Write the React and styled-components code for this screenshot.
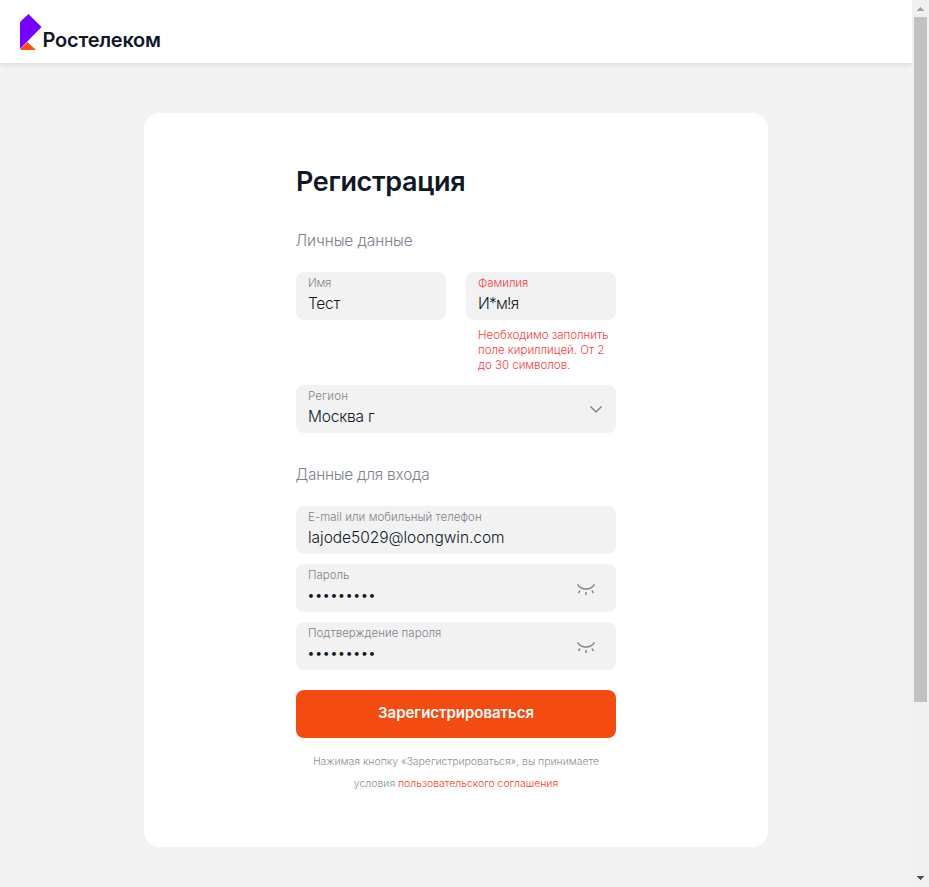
import React from 'react';
import styled, { createGlobalStyle } from 'styled-components';

const GlobalStyle = createGlobalStyle`
  *, *::before, *::after { box-sizing: border-box; }
  html, body { margin: 0; padding: 0; overflow: hidden; background: #f3f3f3; }
  body { font-family: Inter, "Liberation Sans", sans-serif; font-weight: 300; color: #101828; }
`;

const Window = styled.div`
  display: flex;
  width: 100%;
  height: 887px;
  overflow: hidden;
`;

const Page = styled.div`
  flex: 1;
  min-width: 0;
  display: flex;
  flex-direction: column;
  background: #f3f3f3;
`;

const Header = styled.header`
  flex: none;
  height: 63px;
  padding: 14px 0 0 20px;
  display: flex;
  align-items: flex-start;
  background: #fff;
  box-shadow: 0 1px 6px rgba(16, 24, 40, 0.14);
`;

const LogoMark = styled.svg`
  display: block;
  width: 22px;
  height: 36px;
`;

const LogoName = styled.span`
  margin: 14px 0 0 0.6px;
  font-size: 20px;
  line-height: 24px;
  font-weight: 600;
  letter-spacing: -0.25px;
`;

const Card = styled.main`
  flex: none;
  width: 624px;
  height: 734px;
  margin: 50px auto 0;
  padding: 52px 152px 0;
  border-radius: 16px;
  background: #fff;
`;

const Title = styled.h1`
  margin: 0;
  font-size: 27px;
  line-height: 34px;
  font-weight: 600;
  letter-spacing: -0.36px;
`;

const SectionTitle = styled.h2`
  margin: ${p => p.$top}px 0 21px -0.5px;
  font-size: 15.5px;
  line-height: 20px;
  font-weight: 300;
  letter-spacing: ${p => p.$spacing}px;
  color: #7d828c;
`;

const NameRow = styled.div`
  display: grid;
  grid-template-columns: 150px 150px;
  gap: 20px;
  margin-bottom: 12px;
`;

const Stack = styled.div`
  display: flex;
  flex-direction: column;
  gap: 10px;
`;

const FieldBox = styled.div`
  height: 48px;
  padding: 4px 20px 0 12px;
  display: flex;
  justify-content: space-between;
  border-radius: 8px;
  background: #f2f2f2;
`;

const FieldText = styled.div`
  display: flex;
  flex-direction: column;
  white-space: nowrap;
`;

const Label = styled.label`
  font-size: 11.5px;
  line-height: 15px;
  letter-spacing: ${p => p.$spacing}px;
  color: ${p => (p.$error ? '#ff3b3b' : '#7d828c')};
`;

const Value = styled.span`
  margin-top: 3px;
  font-size: 15.5px;
  line-height: 20px;
  letter-spacing: ${p => p.$spacing}px;
`;

const MaskedValue = styled(Value)`
  margin: 2px 0 0 -1px;
  font-size: 14px;
  font-weight: 300;
  letter-spacing: -0.25px;
`;

const FieldIcon = styled.svg`
  flex: none;
  align-self: flex-start;
  display: block;
  width: 20px;
  height: 20px;
  margin: ${p => p.$top}px ${p => p.$right}px 0 0;
  fill: none;
  stroke: #80848f;
  stroke-width: 1.5;
`;

const ErrorText = styled.p`
  margin: 8px 0 0 12px;
  font-size: 11.5px;
  line-height: 15px;
  letter-spacing: -0.02px;
  white-space: nowrap;
  color: #ff3b3b;
`;

const SubmitButton = styled.button`
  display: block;
  width: 320px;
  height: 48px;
  margin: 20px 0 0;
  padding: 0 0 2px;
  border: 0;
  border-radius: 8px;
  background: #f44b12;
  color: #fff;
  font: 600 15px/20px Inter, sans-serif;
  letter-spacing: -0.04px;
`;

const Agreement = styled.p`
  margin: 13px 0 0;
  font-size: 10.5px;
  line-height: 22px;
  letter-spacing: -0.03px;
  text-align: center;
  color: #8b8f98;
`;

const AgreementLink = styled.a`
  color: #ff3b20;
  text-decoration: none;
`;

const Scrollbar = styled.aside`
  flex: none;
  width: 17px;
  display: flex;
  flex-direction: column;
  align-items: center;
  background: #f0f0f0;
`;

const ScrollArrow = styled.svg`
  display: block;
  width: 17px;
  height: 17px;
  margin-top: ${p => (p.$end ? 'auto' : 0)};
  fill: ${p => (p.$end ? '#505050' : '#a3a3a3')};
  shape-rendering: crispEdges;
`;

const ScrollThumb = styled.div`
  width: 13px;
  height: 685px;
  background: #c1c1c1;
`;

function ClosedEye() {
  return (
    <FieldIcon viewBox="0 0 20 20" $top={11} $right={0}>
      <path d="M1.5 5.3C5.5 11.5 14.5 11.5 18.5 5.3M10 13v3M4 11.5l-1.5 2.7M16 11.5l1.5 2.7" />
    </FieldIcon>
  );
}

function Field({ label, value, labelSpacing = 0, spacing = 0, error, masked, children }) {
  return (
    <FieldBox>
      <FieldText>
        <Label $error={error} $spacing={labelSpacing}>{label}</Label>
        {masked ? <MaskedValue>{value}</MaskedValue> : <Value $spacing={spacing}>{value}</Value>}
      </FieldText>
      {children}
    </FieldBox>
  );
}

export default function App() {
  return (
    <Window>
      <GlobalStyle />
      <Page>
        <Header>
          <LogoMark viewBox="0 0 22 36">
            <path fill="#7700ff" d="M8.5 0 21.5 13 0 35V9.5Q0 8 1.2 6.8Z" />
            <path fill="#ff4f12" d="M7.5 28 16 36H1.5Q0 36 .5 34.8Z" />
          </LogoMark>
          <LogoName>Ростелеком</LogoName>
        </Header>
        <Card>
          <Title>Регистрация</Title>
          <SectionTitle $top={32} $spacing={-0.12}>Личные данные</SectionTitle>
          <NameRow>
            <Field label="Имя" value="Тест" labelSpacing={-0.2} spacing={-0.3} />
            <div>
              <Field label="Фамилия" value="И*м!я" labelSpacing={-0.08} spacing={-0.75} error />
              <ErrorText>
                Необходимо заполнить<br />поле кириллицей. От 2<br />до 30 символов.
              </ErrorText>
            </div>
          </NameRow>
          <Field label="Регион" value="Москва г" labelSpacing={0.15} spacing={-0.2}>
            <FieldIcon viewBox="0 0 20 20" $top={10} $right={-10}>
              <path d="m4.5 7.5 5.5 5.5 5.5-5.5" />
            </FieldIcon>
          </Field>
          <SectionTitle $top={32} $spacing={-0.26}>Данные для входа</SectionTitle>
          <Stack>
            <Field label="E-mail или мобильный телефон" value="lajode5029@loongwin.com" labelSpacing={0.04} spacing={-0.04} />
            <Field label="Пароль" value="•••••••••" masked><ClosedEye /></Field>
            <Field label="Подтверждение пароля" value="•••••••••" labelSpacing={0.02} masked><ClosedEye /></Field>
          </Stack>
          <SubmitButton>Зарегистрироваться</SubmitButton>
          <Agreement>
            Нажимая кнопку «Зарегистрироваться», вы принимаете<br />условия{' '}
            <AgreementLink>пользовательского соглашения</AgreementLink>
          </Agreement>
        </Card>
      </Page>
      <Scrollbar>
        <ScrollArrow viewBox="0 0 17 17"><path d="M8 7h1v1h1v1h1v1h1v1H5v-1h1V9h1V8h1z" /></ScrollArrow>
        <ScrollThumb />
        <ScrollArrow viewBox="0 0 17 17" $end><path d="M5 6h7v1h-1v1h-1v1H9v1H8V9H7V8H6V7H5z" /></ScrollArrow>
      </Scrollbar>
    </Window>
  );
}
